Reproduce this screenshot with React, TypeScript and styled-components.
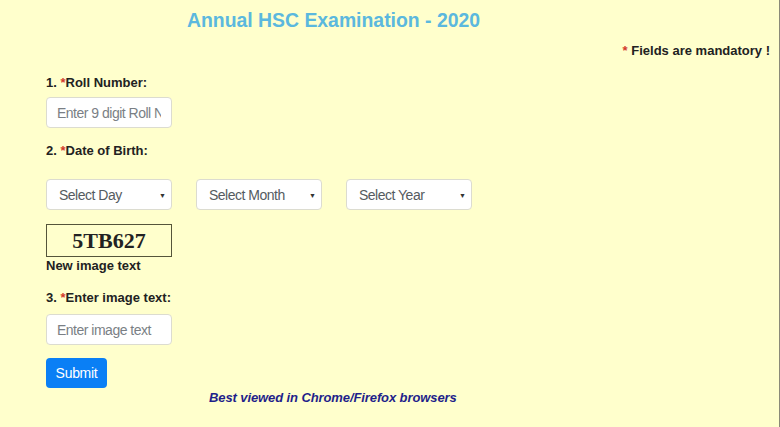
import React from "react";
import styled, { createGlobalStyle } from "styled-components";

const Global = createGlobalStyle`
  html, body { margin: 0; padding: 0; background: #ffffcc; }
  body { font-family: "Liberation Sans", Arial, sans-serif; }
`;

const Page = styled.div`
  width: 779px;
  height: 427px;
  border-right: 1px solid #8a8a78;
  background: #ffffcc;
  box-sizing: content-box;
  overflow: hidden;
`;

const Title = styled.h1`
  margin: 0;
  width: 667px;
  padding-top: 9px;
  text-align: center;
  font-size: 19.4px;
  line-height: 22px;
  font-weight: bold;
  color: #5bb8de;
`;

const Mandatory = styled.div`
  margin-top: 12px;
  padding-right: 9px;
  text-align: right;
  font-size: 13px;
  line-height: 16px;
  font-weight: bold;
  color: #222;
`;

const Star = styled.span`
  color: #d33a2c;
`;

const Form = styled.form`
  padding-left: 46px;
  display: flex;
  flex-direction: column;
  align-items: flex-start;
`;

const Label = styled.label<{ $top: number }>`
  display: block;
  margin-top: ${(p) => p.$top}px;
  font-size: 13px;
  line-height: 16px;
  font-weight: bold;
  color: #222;
`;

const Input = styled.input<{ $top: number }>`
  box-sizing: border-box;
  margin-top: ${(p) => p.$top}px;
  width: 126px;
  height: 31px;
  padding: 0 10px;
  border: 1px solid #dcdcd0;
  border-radius: 4px;
  background: #fff;
  font-family: "Liberation Sans", Arial, sans-serif;
  font-size: 14px;
  letter-spacing: -0.5px;
  color: #495057;
  outline: none;
  &::placeholder { color: #7a7f85; }
`;

const SelectRow = styled.div`
  margin-top: 20px;
  display: flex;
  gap: 24px;
`;

const SelectBox = styled.div`
  position: relative;
  box-sizing: border-box;
  width: 126px;
  height: 31px;
  padding: 0 0 0 12px;
  display: flex;
  align-items: center;
  border: 1px solid #dcdcd0;
  border-radius: 4px;
  background: #fff;
  font-size: 14px;
  letter-spacing: -0.5px;
  color: #555b61;
`;

const Arrow = styled.span`
  position: absolute;
  right: 5px;
  top: 50%;
  transform: translateY(-50%);
  font-size: 7px;
  letter-spacing: 0;
  color: #333;
`;

const Captcha = styled.div`
  box-sizing: border-box;
  margin-top: 14px;
  width: 126px;
  height: 33px;
  border: 1px solid #55553a;
  display: flex;
  align-items: center;
  justify-content: center;
  font-family: "Liberation Serif", "Times New Roman", serif;
  font-weight: bold;
  font-size: 22px;
  color: #222;
`;

const CaptchaHint = styled.div`
  margin-top: 1px;
  font-size: 13px;
  line-height: 16px;
  font-weight: bold;
  color: #222;
`;

const SubmitButton = styled.button`
  margin-top: 13px;
  width: 61px;
  height: 30px;
  border: none;
  border-radius: 4px;
  background: #0a7ff5;
  color: #fff;
  font-family: "Liberation Sans", Arial, sans-serif;
  font-size: 14px;
  letter-spacing: -0.3px;
  padding: 0;
`;

const Footer = styled.div`
  margin-top: 2px;
  padding-left: 209px;
  font-size: 13px;
  line-height: 16px;
  font-weight: bold;
  font-style: italic;
  letter-spacing: -0.1px;
  color: #1f1f8a;
`;

export default function App() {
  return (
    <Page>
      <Global />
      <Title>Annual HSC Examination - 2020</Title>
      <Mandatory>
        <Star>*</Star> Fields are mandatory !
      </Mandatory>
      <Form onSubmit={(e) => e.preventDefault()}>
        <Label $top={16}>
          1. <Star>*</Star>Roll Number:
        </Label>
        <Input $top={6} placeholder="Enter 9 digit Roll Number" />
        <Label $top={15}>
          2. <Star>*</Star>Date of Birth:
        </Label>
        <SelectRow>
          {["Select Day", "Select Month", "Select Year"].map((t) => (
            <SelectBox key={t}>
              {t}
              <Arrow>▼</Arrow>
            </SelectBox>
          ))}
        </SelectRow>
        <Captcha>5TB627</Captcha>
        <CaptchaHint>New image text</CaptchaHint>
        <Label $top={16}>
          3. <Star>*</Star>Enter image text:
        </Label>
        <Input $top={8} placeholder="Enter image text" />
        <SubmitButton type="submit">Submit</SubmitButton>
      </Form>
      <Footer>Best viewed in Chrome/Firefox browsers</Footer>
    </Page>
  );
}
